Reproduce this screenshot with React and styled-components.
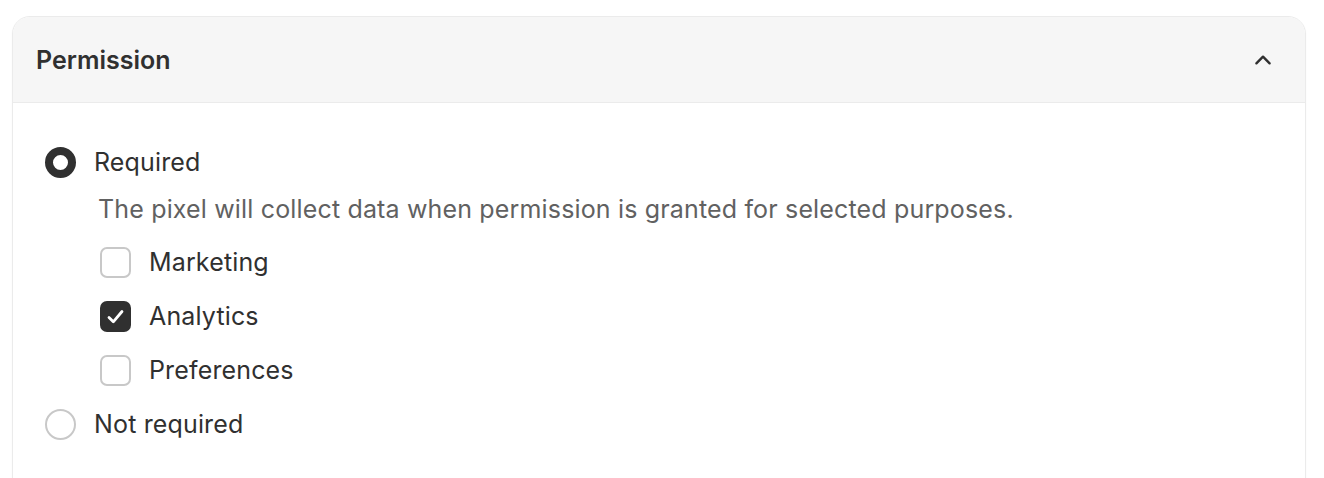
import React, { useState } from "react";
import styled, { createGlobalStyle } from "styled-components";

const Global = createGlobalStyle`
  html, body { margin: 0; padding: 0; background: #ffffff; }
  body { font-family: Inter, "Noto Sans", sans-serif; color: #303030; }
  * { box-sizing: border-box; }
`;

const Page = styled.div`
  padding: 16px 18px 0 12px;
  height: 478px;
  overflow: hidden;
`;

const Card = styled.section`
  border: 1px solid #ebebeb;
  border-radius: 18px;
  background: #ffffff;
  overflow: hidden;
  height: 500px;
  box-shadow: 0 1px 2px rgba(0,0,0,0.04);
`;

const Header = styled.div`
  display: flex;
  align-items: center;
  justify-content: space-between;
  height: 86px;
  padding: 0 31px 0 23px;
  background: #f6f6f6;
  border-bottom: 1px solid #ebebeb;
`;

const Title = styled.h2`
  margin: 0;
  font-size: 25px;
  font-weight: 600;
  color: #303030;
  letter-spacing: 0;
`;

const Body = styled.div`
  padding: 32px 32px;
  display: flex;
  flex-direction: column;
`;

const OptionRow = styled.label`
  display: flex;
  align-items: center;
  gap: 18px;
  height: 54px;
  font-size: 25px;
  letter-spacing: 0.15px;
  color: #303030;
  cursor: pointer;
`;

const Radio = styled.span`
  width: 31px;
  height: 31px;
  border-radius: 50%;
  flex: none;
  background: #ffffff;
  border: ${(p) => (p.$checked ? "8px solid #303030" : "2px solid #c8c8c8")};
`;

const Description = styled.p`
  margin: 4px 0 0 53px;
  font-size: 25px;
  letter-spacing: 0.16px;
  line-height: 32px;
  color: #616161;
`;

const Checks = styled.div`
  display: flex;
  flex-direction: column;
  margin: 10px 0 0 55px;
`;

const CheckRow = styled.label`
  display: flex;
  align-items: center;
  gap: 18px;
  height: 54px;
  font-size: 25px;
  letter-spacing: 0.15px;
  color: #303030;
  cursor: pointer;
`;

const Box = styled.span`
  width: 31px;
  height: 31px;
  border-radius: 7px;
  flex: none;
  display: flex;
  align-items: center;
  justify-content: center;
  background: ${(p) => (p.$checked ? "#303030" : "#ffffff")};
  border: ${(p) => (p.$checked ? "none" : "2px solid #c8c8c8")};
`;

const Chevron = () => (
  <svg width="22" height="22" viewBox="0 0 20 20" fill="none">
    <path d="M4 13l6-6 6 6" stroke="#303030" strokeWidth="2.2" strokeLinecap="round" strokeLinejoin="round" />
  </svg>
);

const Tick = () => (
  <svg width="31" height="31" viewBox="0 0 31 31" fill="none">
    <path d="M9 16.5l4.3 4.3L22 10.5" stroke="#ffffff" strokeWidth="2.8" strokeLinecap="round" strokeLinejoin="round" />
  </svg>
);

export default function App() {
  const [required, setRequired] = useState(true);
  const [purposes, setPurposes] = useState({ Marketing: false, Analytics: true, Preferences: false });
  const toggle = (k) => setPurposes((s) => ({ ...s, [k]: !s[k] }));
  return (
    <>
      <Global />
      <Page>
        <Card>
          <Header>
            <Title>Permission</Title>
            <Chevron />
          </Header>
          <Body>
            <OptionRow onClick={() => setRequired(true)}>
              <Radio $checked={required} />
              Required
            </OptionRow>
            <Description>The pixel will collect data when permission is granted for selected purposes.</Description>
            <Checks>
              {Object.keys(purposes).map((k) => (
                <CheckRow key={k} onClick={() => toggle(k)}>
                  <Box $checked={purposes[k]}>{purposes[k] && <Tick />}</Box>
                  {k}
                </CheckRow>
              ))}
            </Checks>
            <OptionRow onClick={() => setRequired(false)}>
              <Radio $checked={!required} />
              Not required
            </OptionRow>
          </Body>
        </Card>
      </Page>
    </>
  );
}
